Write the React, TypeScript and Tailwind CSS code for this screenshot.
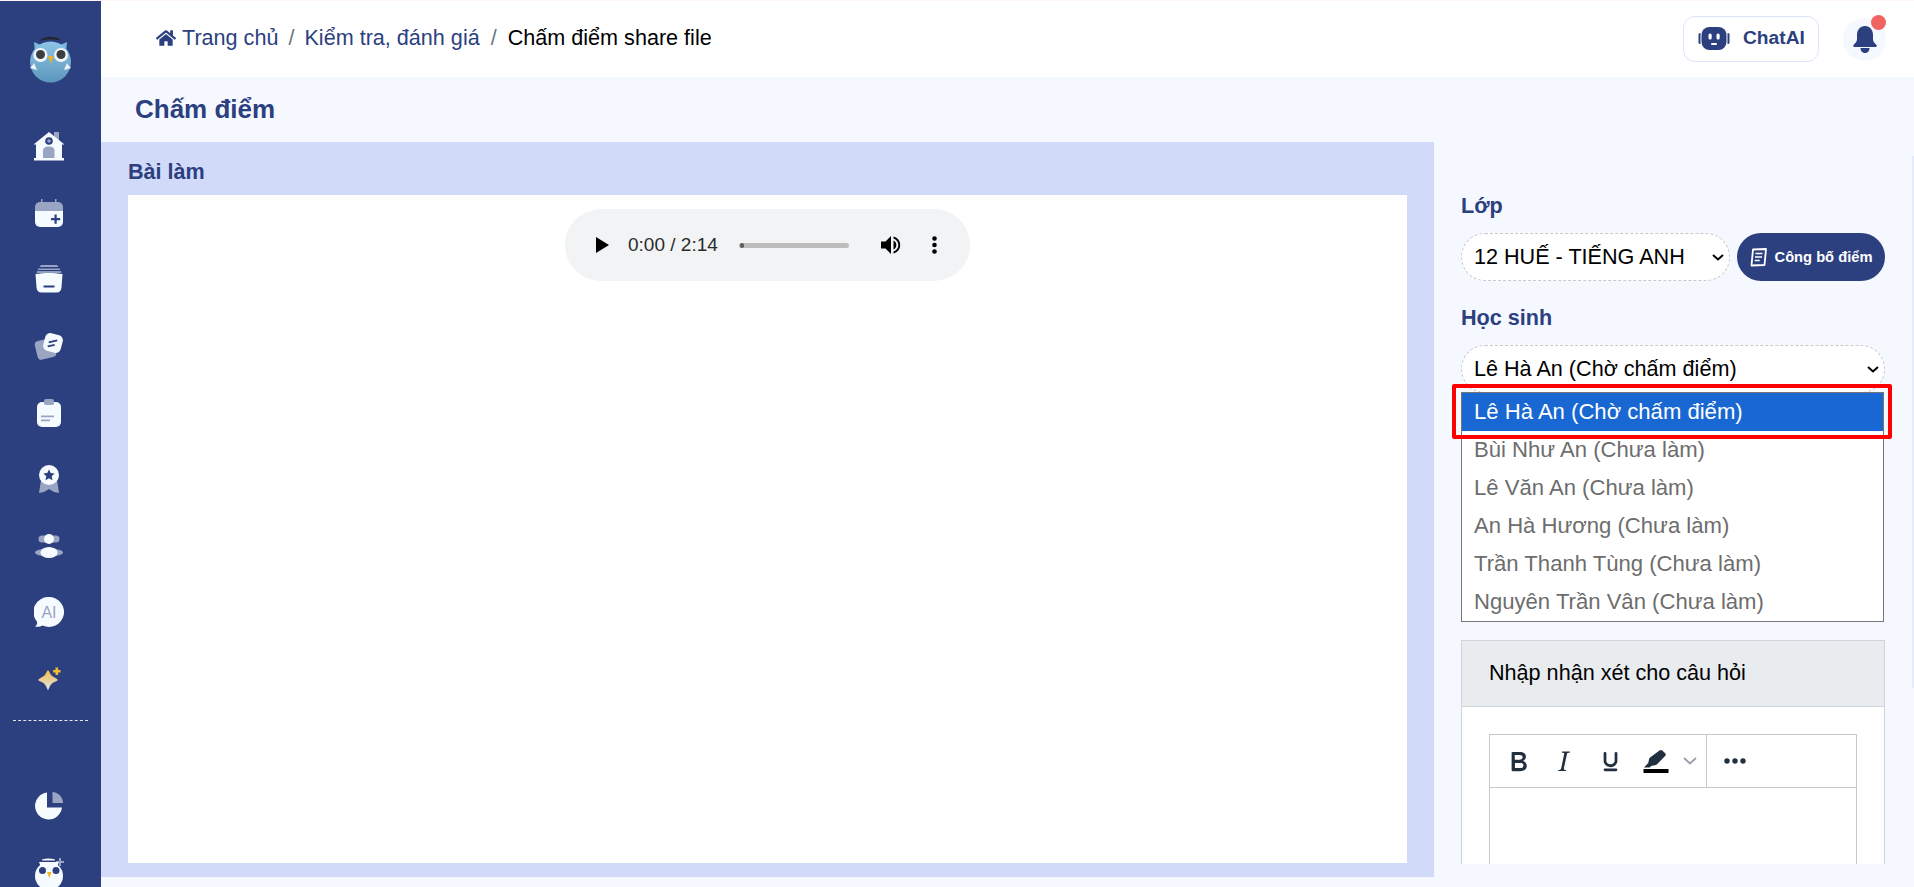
import { FaHome } from 'react-icons/fa';

const navy = '#2c3f7f';
const soft = '#9aa5c4';
const paper = '#f6fbff';

function OwlLogo() {
  return (
    <svg width="48" height="50" viewBox="0 0 48 50">
      <defs>
        <linearGradient id="owlBody" x1="0" y1="0" x2="0" y2="1">
          <stop offset="0" stopColor="#8ec5e8" />
          <stop offset="1" stopColor="#5b97bb" />
        </linearGradient>
      </defs>
      <path d="M7 8l1 10 8-6zM40 8l-1 10-8-6z" fill="#7db7dc" />
      <circle cx="23.5" cy="28" r="20.5" fill="url(#owlBody)" />
      <path d="M13 6.500c4-5 17-5 21 0-6-1.500-15-1.500-21 0z" fill="#22272f" />
      <circle cx="13.500" cy="21" r="7" fill="#f4f6f7" />
      <circle cx="34" cy="21" r="7" fill="#f4f6f7" />
      <circle cx="13.500" cy="20.500" r="4.500" fill="#3b3f44" />
      <circle cx="34" cy="20.500" r="4.500" fill="#3b3f44" />
      <path d="M21 22h5.500l-2.700 7.500z" fill="#f0b323" />
      <path d="M3 34c1-1 3-3 4-5l3 7-7-2zM44 34c-1-1-3-3-4-5l-3 7z" fill="#f2f5f7" />
    </svg>
  );
}

function HomeIcon() {
  return (
    <svg width="32" height="30" viewBox="0 0 32 30">
      <path d="M21 1h5v10h-5z" fill={soft} />
      <path d="M16 1L0.500 13.500H3v14h26v-14h2.500z" fill={paper} />
      <path d="M1 27h30v2.500H1z" fill={paper} />
      <path d="M10 27V19.500c0-2.500 2.500-4 6-4s5.500 1.500 5.500 4V27z" fill={soft} />
      <circle cx="16" cy="10" r="3.800" fill={navy} />
      <circle cx="16" cy="10" r="1.800" fill={soft} />
    </svg>
  );
}

function CalendarIcon() {
  return (
    <svg width="28" height="28" viewBox="0 0 28 28">
      <path d="M6 0h1.500v4H6zM20 0h1.500v4H20z" fill={soft} />
      <path d="M0 11h28v12a5 5 0 0 1-5 5H5a5 5 0 0 1-5-5z" fill={paper} />
      <path d="M5 3h18a5 5 0 0 1 5 5v4H0V8a5 5 0 0 1 5-5z" fill={soft} />
      <path d="M16 19h3.500v-3.500h2.200V19h3.500v2.200h-3.500v3.500h-2.200v-3.500H16z" fill={navy} />
    </svg>
  );
}

function DrawerIcon() {
  return (
    <svg width="28" height="28" viewBox="0 0 28 28">
      <path d="M6 0h16l1.500 2h-19z" fill={soft} />
      <path d="M3 3.500h22V5H3z" fill={soft} />
      <path d="M2 6.500h24l.5 1H1.500z" fill={paper} />
      <path d="M0.500 9c8-1.500 19-1.500 27 0l-1 13.500c-.2 3-2 5-5 5H6.500c-3 0-4.800-2-5-5z" fill={paper} />
      <path d="M8.500 20.500h11v2h-11z" fill={navy} />
    </svg>
  );
}

function CardsIcon() {
  return (
    <svg width="30" height="30" viewBox="0 0 30 30">
      <rect x="2" y="8.500" width="19" height="19" rx="4" fill={soft} transform="rotate(-14 11.500 18)" />
      <rect x="10" y="3" width="18" height="18" rx="5" fill={paper} transform="rotate(15 19 12)" />
      <path d="M14.500 10.500l8.500-2 .4 1.800-8.500 2zM13.500 14.500l7-1.600.4 1.800-7 1.600z" fill={navy} />
    </svg>
  );
}

function ClipboardIcon() {
  return (
    <svg width="24" height="28" viewBox="0 0 24 28">
      <rect x="0" y="3" width="24" height="25" rx="5" fill={paper} />
      <rect x="7" y="0" width="10" height="6" rx="2" fill={soft} />
      <path d="M4 16.500h13v1.700H4zM4 20.500h9v1.700H4z" fill={soft} />
    </svg>
  );
}

function MedalIcon() {
  return (
    <svg width="20" height="29" viewBox="0 0 20 29">
      <path d="M2 15h16l2 13-5-1-5-3-5 3-5 1z" fill={soft} />
      <circle cx="10" cy="10" r="10" fill={paper} />
      <path d="M10 4.500l1.700 3.600 3.900.5-2.900 2.700.8 3.900-3.500-2-3.500 2 .8-3.900-2.900-2.700 3.900-.5z" fill={navy} />
    </svg>
  );
}

function PeopleIcon() {
  return (
    <svg width="28" height="24" viewBox="0 0 28 24">
      <rect x="3.500" y="1.500" width="21" height="7" rx="3.500" fill={soft} />
      <ellipse cx="14" cy="18.500" rx="14" ry="4" fill={soft} />
      <circle cx="14" cy="5" r="5" fill={paper} />
      <ellipse cx="14" cy="18.500" rx="8.500" ry="5.500" fill={paper} />
    </svg>
  );
}

function AiBubble() {
  return (
    <svg width="30" height="31" viewBox="0 0 30 31">
      <path d="M15 0a15 15 0 1 1-6.500 28.500C6.500 29.800 3.500 30 1 29.500c1.500-1 2.200-2.500 2.200-4.500A15 15 0 0 1 15 0z" fill={paper} />
      <text x="15" y="21" textAnchor="middle" fontSize="16" fill={soft} fontFamily="'Liberation Sans', sans-serif">AI</text>
    </svg>
  );
}

function SparkIcon() {
  return (
    <svg width="23" height="24" viewBox="0 0 23 24">
      <defs>
        <linearGradient id="sparkFill" x1="0" y1="0" x2="0" y2="1">
          <stop offset="0" stopColor="#f4bd45" />
          <stop offset="1" stopColor="#dfe2ee" />
        </linearGradient>
      </defs>
      <path d="M10 3c1.500 1 2 4.500 4 6 1.500 1.200 4.500 2 6 4-1.500 1.500-4.500 2.200-6 3.500-2 1.500-2.800 4.500-4 7-1.200-2.500-2-5.500-4-7C4.500 15.200 1.500 14.500 0 13c1.500-2 4.500-2.800 6-4 2-1.500 2.500-5 4-6z" fill="url(#sparkFill)" />
      <path d="M17.500 0.500h2.600v2.400h2.400v2.600h-2.400v2.400h-2.600V5.500h-2.400V2.900h2.400z" fill="#f4bd30" />
    </svg>
  );
}

function PieIcon() {
  return (
    <svg width="28" height="28" viewBox="0 0 28 28">
      <path d="M12 0.500v15h15a13.500 13.500 0 1 1-15-15z" fill={paper} />
      <path d="M17.500 0c5.500 0 10.500 5 10.500 11H17.500z" fill={soft} />
    </svg>
  );
}

function OwlSmall() {
  return (
    <svg width="29" height="30" viewBox="0 0 29 30">
      <path d="M24 1h2v3h3v2h-3v3h-2V6h-3V4h3z" fill={soft} />
      <path d="M7 2.500c4-1.500 9-1.500 13 0v1H7z" fill={paper} />
      <ellipse cx="14" cy="19" rx="14" ry="14" fill={paper} />
      <path d="M4 5l2 5h16l2-5z" fill={paper} />
      <circle cx="7.500" cy="13.500" r="3.500" fill={navy} />
      <circle cx="21" cy="13.500" r="3.500" fill={navy} />
      <path d="M12 15h4.500l-2.200 6z" fill="#f0b323" />
    </svg>
  );
}

function SideSlot({ children }: { children: React.ReactNode }) {
  return <div className="h-[66.6px] shrink-0 flex items-center justify-center pr-[3px]">{children}</div>;
}

function Sidebar() {
  return (
    <aside className="w-[101px] shrink-0 bg-[#2c3f7f] overflow-hidden flex flex-col">
      <div className="h-[112px] shrink-0 flex justify-center pt-[33px]">
        <OwlLogo />
      </div>
      <SideSlot><HomeIcon /></SideSlot>
      <SideSlot><CalendarIcon /></SideSlot>
      <SideSlot><DrawerIcon /></SideSlot>
      <SideSlot><CardsIcon /></SideSlot>
      <SideSlot><ClipboardIcon /></SideSlot>
      <SideSlot><MedalIcon /></SideSlot>
      <SideSlot><PeopleIcon /></SideSlot>
      <SideSlot><AiBubble /></SideSlot>
      <SideSlot><SparkIcon /></SideSlot>
      <div className="mt-[8px] ml-[13px] w-[75px] border-t border-dashed border-[#e6e9f2] shrink-0" />
      <div className="h-[51px] shrink-0" />
      <SideSlot><PieIcon /></SideSlot>
      <SideSlot><OwlSmall /></SideSlot>
    </aside>
  );
}

function RobotIcon() {
  return (
    <svg width="32" height="25" viewBox="0 0 32 25">
      <rect x="3.500" y="1" width="25" height="23" rx="8" fill={navy} />
      <path d="M0.500 8.500c0-1 .8-1.500 2-1.500v11c-1.200 0-2-.5-2-1.500zM31.500 8.500c0-1-.8-1.500-2-1.500v11c1.200 0 2-.5 2-1.500z" fill={navy} />
      <rect x="10.500" y="7.500" width="3.200" height="6" rx="1.500" fill="#fff" />
      <rect x="18.500" y="7.500" width="3.200" height="6" rx="1.500" fill="#fff" />
      <rect x="13" y="17" width="6" height="2" rx="1" fill="#fff" />
    </svg>
  );
}

function BellIcon() {
  return (
    <svg width="24" height="27" viewBox="0 0 24 27">
      <path d="M12 0c5 0 8 4 8 9v4.500c0 2 2 4 3.500 5.500.7.700.3 2-1 2H1.500c-1.300 0-1.700-1.300-1-2C2 17.500 4 15.500 4 13.500V9c0-5 3-9 8-9z" fill={navy} />
      <path d="M7.500 22h9c0 3-2 5-4.500 5s-4.500-2-4.500-5z" fill={navy} />
    </svg>
  );
}

function Header() {
  return (
    <header className="h-[76px] shrink-0 bg-white flex items-center justify-between pl-[55px] pr-[28px]">
      <nav className="flex items-center text-[21.600px] text-[#2c3f7f] -mt-[1px]">
        <FaHome className="text-[20px] mr-[6px]" />
        <span>Trang chủ</span>
        <span className="mx-[10px] text-[#6c757d]">/</span>
        <span>Kiểm tra, đánh giá</span>
        <span className="ml-[11px] mr-[11px] text-[#6c757d]">/</span>
        <span className="text-black">Chấm điểm share file</span>
      </nav>
      <div className="flex items-center gap-[24px]">
        <div className="h-[46px] w-[136px] rounded-[12px] border border-[#dbe4fb] bg-white flex items-center pl-[14px] gap-[13px] -mt-[1px]">
          <RobotIcon />
          <span className="text-[19.200px] font-bold text-[#2c3f7f]">ChatAI</span>
        </div>
        <div className="relative h-[43px] w-[43px] rounded-full bg-[#f5f8ff] flex items-center justify-center">
          <BellIcon />
          <span className="absolute -top-[3px] right-0 h-[15px] w-[15px] rounded-full bg-[#ef6461]" />
        </div>
      </div>
    </header>
  );
}

function AudioBar() {
  return (
    <div className="mx-auto mt-[14px] h-[72px] w-[405px] rounded-full bg-[#f1f3f4] flex items-center">
      <svg className="ml-[31px]" width="13" height="16" viewBox="0 0 13 16">
        <path d="M0 0l13 8-13 8z" fill="#000" />
      </svg>
      <span className="ml-[19px] w-[90px] whitespace-nowrap text-[19px] text-[#2b2b2b]">0:00 / 2:14</span>
      <div className="ml-[21px] relative h-[5px] w-[110px] rounded-full bg-[#bdbdbd]">
        <span className="absolute left-[1px] top-0 h-[5px] w-[4px] rounded-full bg-[#5c5c5c]" />
      </div>
      <svg className="ml-[32px]" width="21" height="20" viewBox="0 0 21 20">
        <path d="M0 6.500h4.500L10 1v18l-5.500-5.500H0z" fill="#000" />
        <path d="M12.500 5.500c1.800.8 2.800 2.500 2.800 4.500s-1 3.700-2.800 4.500z" fill="#000" />
        <path d="M12.500 1.500c4 .9 6.700 4.400 6.700 8.500s-2.700 7.600-6.700 8.500v-2c2.900-.9 4.800-3.500 4.800-6.500s-1.900-5.600-4.800-6.500z" fill="#000" />
      </svg>
      <svg className="ml-[30px]" width="5" height="18" viewBox="0 0 5 18">
        <circle cx="2.500" cy="2.500" r="2.300" fill="#000" />
        <circle cx="2.500" cy="9" r="2.300" fill="#000" />
        <circle cx="2.500" cy="15.500" r="2.300" fill="#000" />
      </svg>
    </div>
  );
}

function WorkPanel() {
  return (
    <section className="w-[1333px] h-[735px] shrink-0 bg-[#d2daf9] px-[27px] pt-[18px]">
      <h2 className="text-[21.600px] leading-[24px] font-bold text-[#2c3f7f] mb-[11px]">Bài làm</h2>
      <div className="h-[668px] bg-white overflow-hidden">
        <AudioBar />
      </div>
    </section>
  );
}

const students = ['Bùi Như An (Chưa làm)', 'Lê Văn An (Chưa làm)', 'An Hà Hương (Chưa làm)', 'Trần Thanh Tùng (Chưa làm)', 'Nguyên Trần Vân (Chưa làm)'];

function Chevron() {
  return (
    <svg className="absolute right-[6px] top-[21px] pointer-events-none" width="12" height="7" viewBox="0 0 12 7">
      <path d="M1 1l5 4.500L11 1" stroke="#000" strokeWidth="2" fill="none" />
    </svg>
  );
}

function EditorToolbar() {
  return (
    <div className="h-[53px] flex items-center border-b border-[#c8c8c8]">
      <div className="w-[217px] h-full flex items-center border-r border-[#c8c8c8]">
        <svg className="ml-[12px]" width="33" height="33" viewBox="0 0 24 24">
          <path fill="#222f3e" d="M7.800 19c-.3 0-.5 0-.6-.2l-.2-.5V5.700c0-.2 0-.4.2-.5l.6-.2h5c1.500 0 2.700.3 3.500 1 .7.600 1.100 1.400 1.100 2.500a3 3 0 0 1-.6 1.900c-.4.600-1 1-1.600 1.200.4.100.9.300 1.300.6s.8.700 1 1.200c.4.400.5 1 .5 1.600 0 1.300-.4 2.300-1.300 3-.8.700-2.100 1-3.800 1H7.800zm5-8.300c.6 0 1.200-.1 1.600-.5.4-.3.6-.7.6-1.300 0-1.100-.8-1.700-2.300-1.700H9.300v3.500h3.400zm.5 6c.7 0 1.300-.1 1.700-.4.4-.4.600-.9.600-1.500s-.2-1-.7-1.400c-.4-.3-1-.4-2-.4H9.400v3.800h4z" />
        </svg>
        <svg className="ml-[12px]" width="33" height="33" viewBox="0 0 24 24">
          <path fill="#222f3e" d="M16.700 4.700l-.1.900h-.3c-.6 0-1 0-1.400.3-.3.300-.4.600-.5 1.100l-2.100 9.800v.6c0 .5.400.8 1.400.8h.2l-.2.800H8l.2-.8h.2c1.100 0 1.800-.5 2-1.500l2-9.800.1-.5c0-.6-.4-.8-1.400-.8h-.3l.2-.9h5.800z" />
        </svg>
        <svg className="ml-[14px]" width="33" height="33" viewBox="0 0 24 24">
          <path fill="#222f3e" d="M16 5c.6 0 1 .4 1 1v5.500a4 4 0 0 1-.4 1.800l-1 1.400a5.300 5.300 0 0 1-5.500 1 5 5 0 0 1-1.600-1c-.5-.4-.8-.9-1.100-1.400a4 4 0 0 1-.4-1.800V6c0-.6.400-1 1-1s1 .4 1 1v5.500c0 .3 0 .6.200 1l.6.700a3.300 3.300 0 0 0 2.200.8 3.400 3.400 0 0 0 2.200-.8c.3-.2.400-.5.600-.8l.2-.9V6c0-.6.400-1 1-1zM8 17h8c.6 0 1 .4 1 1s-.4 1-1 1H8a1 1 0 0 1-1-1c0-.6.400-1 1-1z" />
        </svg>
        <svg className="ml-[16px]" width="26" height="24" viewBox="0 0 26 24">
          <path fill="#222f3e" d="M16.500 1.500c.8-.7 2-.7 2.700 0l3 2.800c.8.800.7 2-.1 2.700l-8.300 8.500-1 .6-4.500 1-1.800 1.400H1l4.200-4.400 1-4.300.5-1z" />
          <rect x="0.500" y="20" width="25" height="4" fill="#000" />
        </svg>
        <svg className="ml-[14px]" width="14" height="8" viewBox="0 0 14 8">
          <path d="M1 1l6 5.500L13 1" stroke="#9aa0a8" strokeWidth="1.800" fill="none" />
        </svg>
      </div>
      <svg className="ml-[17px]" width="22" height="6" viewBox="0 0 22 6">
        <circle cx="3" cy="3" r="2.700" fill="#222f3e" />
        <circle cx="11" cy="3" r="2.700" fill="#222f3e" />
        <circle cx="19" cy="3" r="2.700" fill="#222f3e" />
      </svg>
    </div>
  );
}

function GradingColumn() {
  return (
    <div className="flex-1 min-w-0 h-[722px] overflow-hidden pl-[27px] pr-[29px] pt-[52px]">
      <label className="block text-[21.600px] leading-[24px] font-bold text-[#2c3f7f] mb-[15px]">Lớp</label>
      <div className="flex items-center gap-[7px]">
        <div className="relative w-[269px] shrink-0">
          <select className="appearance-none h-[48px] w-full rounded-[24px] border border-dashed border-[#c9c9c9] bg-white pl-[12px] pr-[24px] text-[21.600px] text-black">
            <option>12 HUẾ - TIẾNG ANH</option>
          </select>
          <Chevron />
        </div>
        <button className="h-[48px] flex-1 rounded-full bg-[#2c3f7f] flex items-center justify-center gap-[7px] text-[14.700px] font-bold text-white whitespace-nowrap">
          <svg width="18" height="19" viewBox="0 0 18 19">
            <path d="M3 1.500l13-.5-1.500 16-13 .5z" fill="none" stroke="#fff" strokeWidth="1.800" strokeLinejoin="round" />
            <path d="M5.500 5.500h7M5 9h7M4.700 12.500h5" stroke="#fff" strokeWidth="1.500" />
          </svg>
          Công bố điểm
        </button>
      </div>
      <label className="block mt-[25px] text-[21.600px] leading-[24px] font-bold text-[#2c3f7f] mb-[15px]">Học sinh</label>
      <div className="relative mb-[247px]">
        <select className="appearance-none h-[48px] w-full rounded-[24px] border border-dashed border-[#c9c9c9] bg-white pl-[12px] pr-[24px] text-[21.600px] text-black">
          <option>Lê Hà An (Chờ chấm điểm)</option>
        </select>
        <Chevron />
      </div>
      <div className="border border-[#ced4da] bg-white">
        <div className="h-[66px] bg-[#e9ecef] border-b border-[#ced4da] flex items-center pl-[27px] text-[21.600px] text-black">Nhập nhận xét cho câu hỏi</div>
        <div className="px-[27px] pt-[27px]">
          <div className="h-[300px] border border-[#c8c8c8]">
            <EditorToolbar />
          </div>
        </div>
      </div>
    </div>
  );
}

function StudentDropdown() {
  return (
    <div className="absolute left-[1461px] top-[392px] w-[423px] border border-[#767676] bg-white text-[22.100px] text-[#6d6d6d]">
      <div className="h-[38px] bg-[#1967d2] text-white flex items-center pl-[12px]">Lê Hà An (Chờ chấm điểm)</div>
      {students.map((s) => (
        <div key={s} className="h-[38px] flex items-center pl-[12px]">{s}</div>
      ))}
    </div>
  );
}

export default function App() {
  return (
    <div className="relative h-[887px] w-[1914px] overflow-hidden bg-[#f5f8ff] font-['Liberation_Sans',Arial,sans-serif]">
      <div className="h-[1px] bg-[#fff4f4]" />
      <div className="flex h-[886px]">
        <Sidebar />
        <main className="flex-1 min-w-0 flex flex-col">
          <Header />
          <div className="h-[65px] shrink-0 flex items-center pl-[34px]">
            <h1 className="text-[26px] font-bold text-[#2c3f7f]">Chấm điểm</h1>
          </div>
          <div className="flex">
            <WorkPanel />
            <GradingColumn />
          </div>
        </main>
      </div>
      <StudentDropdown />
      <div className="absolute left-[1452px] top-[384px] h-[55px] w-[440px] rounded-[2px] border-[4px] border-[#ff0000]" />
      <div className="absolute left-[1912px] top-[156px] h-[532px] w-[2px] bg-[#e6ebfc]" />
    </div>
  );
}
